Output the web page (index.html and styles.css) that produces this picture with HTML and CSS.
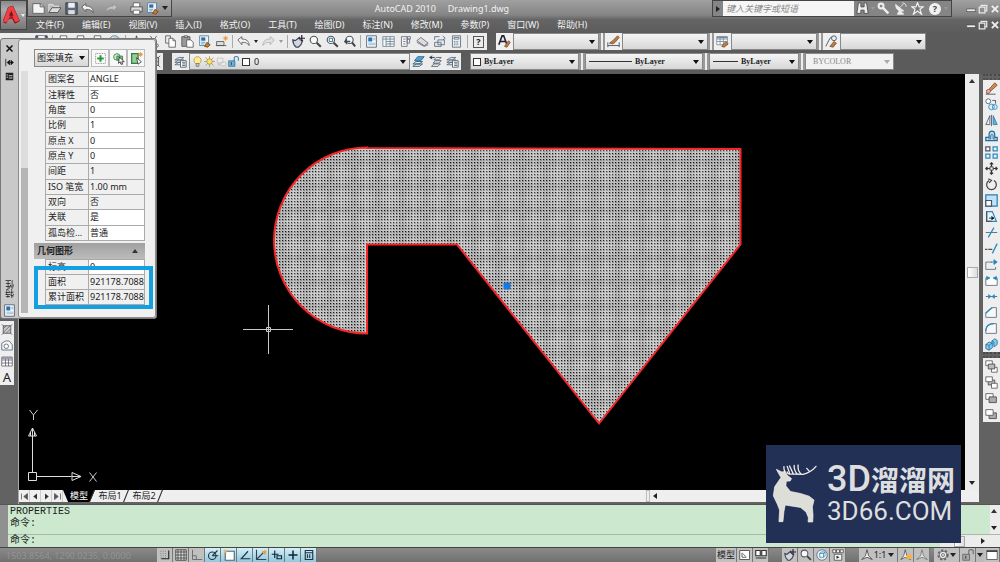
FILE: index.html
```html
<!DOCTYPE html>
<html lang="zh-CN">
<head>
<meta charset="utf-8">
<title>AutoCAD 2010 Drawing1.dwg</title>
<link rel="stylesheet" href="styles.css">
</head>
<body>
<svg class="sprite" aria-hidden="true">
  <symbol id="new" viewBox="0 0 16 16"><path d="M1 2h9l5 4v8H1z" fill="#f4f4f4" stroke="#555"/><path d="M10 2v4h5" fill="#ccc" stroke="#555"/></symbol>
  <symbol id="open" viewBox="0 0 16 16"><path d="M1 13V3h5l1 2h6v2" fill="#bbb" stroke="#eee"/><path d="M1 13l4-6h11l-4 6z" fill="#ddd" stroke="#444"/></symbol>
  <symbol id="save" viewBox="0 0 16 16"><path d="M1 1h14v14H1z" fill="#5b6a7c" stroke="#333"/><path d="M4 1h8v6H4z" fill="#eef"/><path d="M4 10h8v5H4z" fill="#ddd"/></symbol>
  <symbol id="undo" viewBox="0 0 16 16"><path d="M1 6l5-4v3c5 0 9 2 9 8-2-3-4-4-9-4v3z" fill="#f2f2f2" stroke="#555"/></symbol>
  <symbol id="redo" viewBox="0 0 16 16"><path d="M15 6l-5-4v3C5 5 1 7 1 13c2-3 4-4 9-4v3z" fill="#ddd" stroke="#888"/></symbol>
  <symbol id="print" viewBox="0 0 16 16"><path d="M4 6V1h8v5" fill="#fff" stroke="#555"/><path d="M1 6h14v6H1z" fill="#ddd" stroke="#444"/><path d="M4 10h8v5H4z" fill="#fff" stroke="#555"/></symbol>
  <symbol id="match" viewBox="0 0 16 16"><path d="M2 1h11v12H2z" fill="#eef4fa" stroke="#4b78a0"/><path d="M4 3h5v4H4z" fill="#2e6da4"/><path d="M4 9h5M4 11h4" stroke="#59a"/><path d="M8 14l3-5 4 3-3 3z" fill="#c07a35" stroke="#7a4515"/></symbol>
  <symbol id="cut" viewBox="0 0 16 16"><path d="M4 1l7 10M12 1L5 11" stroke="#556" fill="none"/><circle cx="4" cy="13" r="2" fill="none" stroke="#556"/><circle cx="12" cy="13" r="2" fill="none" stroke="#556"/></symbol>
  <symbol id="copy" viewBox="0 0 16 16"><path d="M2 1h6v9H2z" fill="#eee" stroke="#555"/><path d="M6 4h5l3 3v8H6z" fill="#fff" stroke="#555"/><path d="M11 4v3h3" fill="none" stroke="#555"/></symbol>
  <symbol id="paste" viewBox="0 0 16 16"><path d="M1 2h10v12H1z" fill="#999" stroke="#555"/><path d="M4 1h4v2H4z" fill="#ddd" stroke="#555"/><path d="M7 6h5l3 3v6H7z" fill="#fff" stroke="#555"/></symbol>
  <symbol id="block" viewBox="0 0 16 16"><path d="M2 8h9v5H2zM1 13h13" fill="#ddd" stroke="#555"/><path d="M13 1v6M10 4h6M11 2l4 4M15 2l-4 4" stroke="#e8902c"/></symbol>
  <symbol id="pan" viewBox="0 0 16 16"><path d="M1 6l3 1 5-4 1 3 3 1-2 5-3 3H5C2 12 1 9 1 6z" fill="#cfd8df" stroke="#445" stroke-width="1.500"/><path d="M12 0v8M8 4h8" stroke="#223" stroke-width="1.500"/></symbol>
  <symbol id="zoom" viewBox="0 0 16 16"><circle cx="6" cy="6" r="4.500" fill="#f4fbff" stroke="#555" stroke-width="1.400"/><path d="M9.500 9.500l5 5" stroke="#444" stroke-width="2.500"/></symbol>
  <symbol id="zoomwin" viewBox="0 0 16 16"><circle cx="6" cy="6" r="4.500" fill="#f4fbff" stroke="#555" stroke-width="1.400"/><path d="M4 4h4v4H4z" fill="none" stroke="#268"/><path d="M9.500 9.500l5 5" stroke="#444" stroke-width="2.500"/></symbol>
  <symbol id="zoomprev" viewBox="0 0 16 16"><circle cx="8" cy="6" r="4.500" fill="#f4fbff" stroke="#555" stroke-width="1.400"/><path d="M11 9l4 5" stroke="#444" stroke-width="2.500"/><path d="M1 8l4-4v3h4v2H5v3z" fill="#3b4c59"/></symbol>
  <symbol id="props" viewBox="0 0 16 16"><path d="M2 1h12v14H2z" fill="#fff" stroke="#456"/><path d="M4 3h5v5H4z" fill="#2774b5"/><path d="M10 4h3M10 6h3M4 10h9M4 12h9" stroke="#7aa5c5"/></symbol>
  <symbol id="center" viewBox="0 0 16 16"><path d="M1 2h14v12H1zM5 2v12M10 2v12M1 5h14M5 8h10M5 11h10" fill="#f5fafc" stroke="#6a7e8c"/></symbol>
  <symbol id="palette" viewBox="0 0 16 16"><path d="M3 2h7v12H3zM10 2h4v3h-4zM10 5h3v5h-3z" fill="#f5f5f5" stroke="#667"/><path d="M5 5h3M5 8h3M5 11h3" stroke="#678"/></symbol>
  <symbol id="sheet" viewBox="0 0 16 16"><path d="M1 7l5-4 9 7-5 3zM1 9l9 5 5-2" fill="#ddd" stroke="#667"/></symbol>
  <symbol id="markup" viewBox="0 0 16 16"><path d="M2 9h8v5H2zM6 6h8v6H6z" fill="#e6edf2" stroke="#567"/><path d="M2 6V2h6M12 1l3 3-3 2" fill="none" stroke="#567"/></symbol>
  <symbol id="calc" viewBox="0 0 16 16"><path d="M3 1h10v14H3z" fill="#e9eef2" stroke="#567"/><path d="M5 3h6v2H5z" fill="#fff" stroke="#567"/><path d="M5 8h6M5 10h6M5 12h6" stroke="#456" stroke-dasharray="1 1"/></symbol>
  <symbol id="layers" viewBox="0 0 16 16"><path d="M1 12l5-3h6l-4 3zM1 9l5-3h6l-4 3zM1 6l5-3h6l-4 3z" fill="#dde6ec" stroke="#567"/><path d="M8 7h7v8H8z" fill="#fff" stroke="#456"/><path d="M10 9h4M10 11h4M10 13h4" stroke="#456"/></symbol>
  <symbol id="layerblue" viewBox="0 0 16 16"><path d="M1 14l4-3h8l-4 3zM1 11l4-3h8l-4 3z" fill="#d4e8f4" stroke="#356"/><path d="M3 7l4-5h8l-4 5z" fill="#4ba3d5" stroke="#25638c"/></symbol>
  <symbol id="layerprev" viewBox="0 0 16 16"><path d="M3 14l3-3h8l-3 3zM5 10l3-3h7l-3 3zM6 6l3-3h6l-3 3z" fill="#eee" stroke="#456"/><path d="M1 3h6M1 3l3-2M1 3l3 2" stroke="#111"/></symbol>
  <symbol id="bulb" viewBox="0 0 16 16"><path d="M5 11C1 7 3 1 8 1s7 6 3 10z" fill="#ffec91" stroke="#a78837"/><path d="M6 11h4v4H6z" fill="#ccc" stroke="#666"/></symbol>
  <symbol id="sun" viewBox="0 0 16 16"><path d="M8 0v16M0 8h16M2 2l12 12M14 2L2 14" stroke="#aa9247"/><circle cx="8" cy="8" r="4" fill="#ffe26c" stroke="#94813b"/></symbol>
  <symbol id="frozen" viewBox="0 0 16 16"><path d="M2 3h8v7H2zM7 9h7v5H7z" fill="#eee" stroke="#bbb"/><path d="M3 12h3M4 10v4" stroke="#bbb"/></symbol>
  <symbol id="lock" viewBox="0 0 16 16"><path d="M9 8V3c0-3 6-3 6 0v4" fill="none" stroke="#357ba8" stroke-width="1.500"/><path d="M1 7h9v8H1z" fill="#6fb2d9" stroke="#23658f"/><path d="M5 9v4" stroke="#123"/></symbol>
  <symbol id="textstyle" viewBox="0 0 16 16"><path d="M1 12L5 1h2l4 11M3 8h6" fill="none" stroke="#223" stroke-width="2"/><path d="M8 14l5-7 2 2-4 6z" fill="#c27a43" stroke="#753"/></symbol>
  <symbol id="dimstyle" viewBox="0 0 16 16"><path d="M1 9v6M15 9v6M1 13h14" stroke="#345"/><path d="M3 10l4-3 6-6 2 2-5 6-3 2z" fill="#c27a43" stroke="#753"/></symbol>
  <symbol id="tablestyle" viewBox="0 0 16 16"><path d="M1 2h13v10H1zM1 5h13M1 8h13M5 2v10M9 2v10" fill="#fff" stroke="#789"/><path d="M1 2h13v2H1z" fill="#789"/><path d="M7 14l5-6 3 3-5 4z" fill="#c27a43" stroke="#753"/></symbol>
  <symbol id="leader" viewBox="0 0 16 16"><path d="M1 14L6 4l3-2" fill="none" stroke="#345"/><circle cx="11" cy="4" r="3" fill="#eee" stroke="#345"/><path d="M6 14l5-6 3 2-4 5z" fill="#c27a43" stroke="#753"/></symbol>
  <symbol id="search" viewBox="0 0 16 16"><path d="M3 1h3v5h4V1h3l2 13h-5v-4H6v4H1z" fill="#eee" stroke="#444"/></symbol>
  <symbol id="key" viewBox="0 0 16 16"><circle cx="5" cy="5" r="3" fill="none" stroke="#eee" stroke-width="2.500"/><path d="M7 7l7 7" stroke="#eee" stroke-width="3"/></symbol>
  <symbol id="dish" viewBox="0 0 16 16"><path d="M2 3c0 6 4 9 10 8zM7 10l-3 5h8zM7 7l5-5" fill="#eee" stroke="#eee"/><path d="M10 1c3 0 5 2 5 5" fill="none" stroke="#eee"/></symbol>
  <symbol id="star" viewBox="0 0 16 16"><path d="M8 1l2 5h5l-4 3 2 6-5-4-5 4 2-6-4-3h5z" fill="#777" stroke="#f0f0f0" stroke-width="1.500"/></symbol>
  <symbol id="min" viewBox="0 0 16 16"><path d="M1 8h14v4H1z" fill="#eee" stroke="#444"/></symbol>
  <symbol id="max" viewBox="0 0 16 16"><path d="M5 5V2h9v9h-3M2 5h9v9H2z" fill="none" stroke="#e8e8e8" stroke-width="2"/></symbol>
  <symbol id="close" viewBox="0 0 16 16"><path d="M3 3l10 10M13 3L3 13" stroke="#eee" stroke-width="3"/></symbol>
  <symbol id="addsel" viewBox="0 0 16 16"><path d="M2 2h12v12H2z" fill="#fff" stroke="#667" stroke-dasharray="1 1"/><path d="M8 4v8M4 8h8" stroke="#239a31" stroke-width="2.500"/></symbol>
  <symbol id="selobj" viewBox="0 0 16 16"><circle cx="6" cy="6" r="4" fill="#c6e8c7" stroke="#377d42"/><path d="M6 5h7v5H6z" fill="#7fc186" stroke="#377d42"/><path d="M9 6l6 6-3 0 1 3-2 0-1-3-2 2z" fill="#fff" stroke="#222"/></symbol>
  <symbol id="quicksel" viewBox="0 0 16 16"><path d="M2 2h8v12H2z" fill="#91cf96" stroke="#377d42" stroke-width="1.500"/><path d="M13 0v6M10 3h6M11 1l4 4M15 1l-4 4" stroke="#e78c24"/><path d="M8 7l6 5-4 3z" fill="#fff" stroke="#333"/></symbol>
  <symbol id="erase" viewBox="0 0 16 16"><path d="M5 9l7-8 3 3-8 7z" fill="#d48d51" stroke="#754528"/><path d="M2 10l3-1 2 2-2 3H2z" fill="#e7b8aa" stroke="#944"/><path d="M1 15h12" stroke="#444"/></symbol>
  <symbol id="copyobj" viewBox="0 0 16 16"><circle cx="4" cy="4" r="3" fill="#fff" stroke="#456"/><circle cx="8" cy="11" r="3.500" fill="#d9effa" stroke="#2785ba"/><circle cx="12" cy="11" r="3" fill="none" stroke="#2785ba"/><path d="M9 3h4v4" fill="none" stroke="#345"/></symbol>
  <symbol id="mirror" viewBox="0 0 16 16"><path d="M6 2v11H1z" fill="#eee" stroke="#456"/><path d="M10 2v11h5z" fill="#68b4e3" stroke="#26749f"/><path d="M8 1v14" stroke="#456"/></symbol>
  <symbol id="offset" viewBox="0 0 16 16"><path d="M1 13V9h4V6c0-6 7-6 7 0v3h3v4z" fill="#b8e0f5" stroke="#1e6f9f" stroke-width="1.500"/><path d="M4 11h3V7c0-2 3-2 3 0v4h3" fill="none" stroke="#456"/></symbol>
  <symbol id="array" viewBox="0 0 16 16"><path d="M1 1h5v5H1z" fill="#fff" stroke="#456" stroke-width="1.500"/><path d="M10 1h5v5h-5zM1 10h5v5H1zM10 10h5v5h-5z" fill="#e2f3fc" stroke="#3188bd" stroke-width="1.500"/></symbol>
  <symbol id="move" viewBox="0 0 16 16"><path d="M8 1v14M1 8h14M6 3l2-2 2 2M6 13l2 2 2-2M3 6L1 8l2 2M13 6l2 2-2 2" fill="none" stroke="#333" stroke-width="1.500"/><path d="M6 6h4v4H6z" fill="#eee" stroke="#333"/></symbol>
  <symbol id="rotate" viewBox="0 0 16 16"><path d="M5 3a6 6 0 1 0 6 0M4 1l4 2-3 3" fill="none" stroke="#444" stroke-width="1.500"/></symbol>
  <symbol id="scale" viewBox="0 0 16 16"><path d="M1 1h14v14H1z" fill="#c3e3f4" stroke="#2380b8" stroke-width="1.500"/><path d="M1 8h7v7H1z" fill="#fff" stroke="#456" stroke-width="1.500"/></symbol>
  <symbol id="stretch" viewBox="0 0 16 16"><path d="M2 14V2h7l5 12z" fill="#e5f3fb" stroke="#3188bd" stroke-width="1.500"/><path d="M2 2v12h6" fill="none" stroke="#456" stroke-width="1.500"/><path d="M5 10h5M8 8l3 2-3 2" stroke="#111"/></symbol>
  <symbol id="trim" viewBox="0 0 16 16"><path d="M1 8h5M10 8h5" stroke="#456"/><path d="M4 14l7-12M6 8h4" stroke="#2987bd" stroke-width="1.500"/></symbol>
  <symbol id="extend" viewBox="0 0 16 16"><path d="M0 9h3M4 9h5" stroke="#456" stroke-width="1.500"/><path d="M9 14l6-12" stroke="#2987bd" stroke-width="1.500"/></symbol>
  <symbol id="breakpt" viewBox="0 0 16 16"><path d="M1 14V5h8M1 14h12v-3" fill="none" stroke="#567"/><path d="M7 5h5M11 2l4 3-4 3z" fill="#2987bd" stroke="#2987bd"/></symbol>
  <symbol id="break" viewBox="0 0 16 16"><path d="M5 5H1v9h14V5h-4" fill="#fff" stroke="#567"/><path d="M2 3l4 2-4 2zM14 3l-4 2 4 2z" fill="#2987bd" stroke="#2987bd"/></symbol>
  <symbol id="join" viewBox="0 0 16 16"><path d="M1 8h14" stroke="#456"/><path d="M4 5l4 3-4 3zM12 5L8 8l4 3z" fill="#2987bd"/></symbol>
  <symbol id="chamfer" viewBox="0 0 16 16"><path d="M1 14V8l7-6h6v12z" fill="#f8f8f8" stroke="#567"/><path d="M1 9l8-7" stroke="#2987bd" stroke-width="1.500"/></symbol>
  <symbol id="fillet" viewBox="0 0 16 16"><path d="M1 14v-3C1 5 5 2 11 2h3v12z" fill="#f8f8f8" stroke="#567"/><path d="M1 11C1 5 5 2 11 2" fill="none" stroke="#2987bd" stroke-width="1.500"/></symbol>
  <symbol id="explode" viewBox="0 0 16 16"><path d="M1 8l4-3 4 1v6l-4 3-4-2zM8 4l4-3 3 2v5l-4 3" fill="#8bcbea" stroke="#1f6f9f"/><path d="M1 8l4 1v6M5 9l4-3M8 4l3 1v6" fill="none" stroke="#1f6f9f"/></symbol>
  <symbol id="front" viewBox="0 0 16 16"><path d="M1 1h8v6H1zM8 9h7v6H8z" fill="#fff" stroke="#555"/><path d="M4 5h8v6H4z" fill="#bbb" stroke="#444"/></symbol>
  <symbol id="back" viewBox="0 0 16 16"><path d="M4 5h8v6H4z" fill="#bbb" stroke="#444"/><path d="M1 1h8v6H1zM8 9h7v6H8z" fill="#fff" stroke="#555"/></symbol>
  <symbol id="above" viewBox="0 0 16 16"><path d="M1 2h9v7H1z" fill="#fff" stroke="#555"/><path d="M5 6h9v7H5z" fill="#aaa" stroke="#444"/></symbol>
  <symbol id="under" viewBox="0 0 16 16"><path d="M5 6h9v7H5z" fill="#aaa" stroke="#444"/><path d="M1 2h9v7H1z" fill="#fff" stroke="#555"/></symbol>
  <symbol id="hatch" viewBox="0 0 16 16"><path d="M3 3h10v10H3z" fill="#ccc" stroke="#445"/><path d="M3 7l4-4M3 12l9-9M7 13l6-6M1 1l3 3M15 1l-3 3M1 15l3-3M15 15l-3-3" stroke="#556"/></symbol>
  <symbol id="region" viewBox="0 0 16 16"><path d="M1 14V5l5-3h5l4 5v7z" fill="#f8f8f8" stroke="#456"/><circle cx="7" cy="9" r="3" fill="#fff" stroke="#456"/></symbol>
  <symbol id="table" viewBox="0 0 16 16"><path d="M1 2h14v12H1zM1 6h14M1 10h14M6 2v12M10 2v12" fill="#fff" stroke="#556"/><path d="M1 2h14v3H1z" fill="#99a"/></symbol>
  <symbol id="snap" viewBox="0 0 16 16"><path d="M2 3h9M2 6h9M2 9h9M2 12h9" stroke="#555" stroke-dasharray="1 2"/><path d="M13 2v11H3" fill="none" stroke="#222" stroke-width="1.500"/></symbol>
  <symbol id="grid" viewBox="0 0 16 16"><path d="M1 1h14v14H1zM1 4h14M1 8h14M1 12h14M4 1v14M8 1v14M12 1v14" fill="#ddd" stroke="#333"/></symbol>
  <symbol id="ortho" viewBox="0 0 16 16"><path d="M2 1v13h13M2 9h5v5" fill="none" stroke="#555"/></symbol>
  <symbol id="polar" viewBox="0 0 16 16"><circle cx="7" cy="9" r="5" fill="none" stroke="#234" stroke-width="1.500"/><path d="M7 9l7-7M7 9h8" stroke="#234" stroke-width="1.500"/></symbol>
  <symbol id="osnap" viewBox="0 0 16 16"><path d="M3 3h12v12H3z" fill="#fff" stroke="#567" stroke-width="1.500"/><path d="M1 1h4v4H1z" fill="#efb462"/></symbol>
  <symbol id="otrack" viewBox="0 0 16 16"><path d="M12 3L3 13h12" fill="none" stroke="#234" stroke-width="1.500"/></symbol>
  <symbol id="ducs" viewBox="0 0 16 16"><path d="M2 1v13h13M2 14l9-9" fill="none" stroke="#345" stroke-width="1.500"/><path d="M13 1v7M9 4h7M10 2l5 5M15 2l-5 5" stroke="#e58d25"/></symbol>
  <symbol id="dyn" viewBox="0 0 16 16"><path d="M5 2v10M1 7h9M8 9h6v4H8z" fill="none" stroke="#123" stroke-width="1.500"/></symbol>
  <symbol id="lwt" viewBox="0 0 16 16"><path d="M8 2v12M2 8h12" stroke="#123" stroke-width="2"/></symbol>
  <symbol id="qp" viewBox="0 0 16 16"><path d="M3 2h10v12H3zM3 5h10M6 7v5M9 7v5" fill="none" stroke="#234" stroke-width="1.500"/></symbol>
  <symbol id="layout" viewBox="0 0 16 16"><path d="M1 2h13v12H1z" fill="#fff" stroke="#333"/><path d="M4 5v6h6M5 6l4 4" fill="none" stroke="#333"/></symbol>
  <symbol id="views" viewBox="0 0 16 16"><path d="M1 2h6v7H1zM9 2h6v7H9zM1 12h14" fill="#fff" stroke="#333" stroke-width="1.500"/></symbol>
  <symbol id="wheel" viewBox="0 0 16 16"><circle cx="8" cy="8" r="7" fill="#e3edf2" stroke="#567"/><path d="M5 6h5v5H5zM5 6l2-2h5v5l-2 2M10 6l2-2" fill="#fff" stroke="#2a7fae"/></symbol>
  <symbol id="motion" viewBox="0 0 16 16"><path d="M1 1h4v4H1zM6 1h4v4H6zM11 1h4v4h-4zM3 7h10v8H3z" fill="#f4f4f4" stroke="#444"/><path d="M6 9l4 2-4 2z" fill="#222"/></symbol>
  <symbol id="anno" viewBox="0 0 16 16"><path d="M8 1l2 8 5 5-7-3-7 3 5-5z" fill="#fff" stroke="#333"/></symbol>
  <symbol id="annobulb" viewBox="0 0 16 16"><path d="M7 1l2 8 5 5-7-3-6 3 4-5z" fill="#fff" stroke="#444"/><circle cx="12" cy="10" r="3.500" fill="#f9b23e"/></symbol>
  <symbol id="gear" viewBox="0 0 16 16"><circle cx="8" cy="8" r="6" fill="none" stroke="#666" stroke-width="3" stroke-dasharray="3 2"/><circle cx="8" cy="8" r="5" fill="#eee" stroke="#555"/><circle cx="8" cy="8" r="2" fill="none" stroke="#555"/></symbol>
  <symbol id="clean" viewBox="0 0 16 16"><path d="M1 2h14v12H1z" fill="#fff" stroke="#444"/><path d="M1 3h14" stroke="#444" stroke-width="2"/></symbol>
</svg>

<div class="app">
  <header class="header">
    <button class="app-menu" aria-label="应用程序菜单">
      <svg class="app-logo" viewBox="0 0 24 28"><path d="M0 23L7 4l6-2 9 20-6 3-4-7-6 2-2 5z" fill="#c51822" stroke="#7b1016"/><path d="M7 4l6-2 9 20-6 1-5-12-5 13-6-1z" fill="#ee3f45"/><path d="M8 15l3-7 3 7z" fill="#6d1a20"/></svg>
      <i class="tri light"></i>
    </button>
    <div class="header-rows">
      <div class="title-row">
        <div class="quick">
          <button aria-label="新建"><svg><use href="#new"/></svg></button><button aria-label="打开"><svg><use href="#open"/></svg></button><button aria-label="保存"><svg><use href="#save"/></svg></button><button aria-label="放弃"><svg><use href="#undo"/></svg></button><i class="tri dim"></i><button aria-label="重做"><svg class="faded"><use href="#redo"/></svg></button><i class="tri dim"></i><button aria-label="打印"><svg><use href="#print"/></svg></button><button aria-label="特性匹配"><svg><use href="#match"/></svg></button><i class="tri"></i>
        </div>
        <h1 class="title"><span>AutoCAD 2010</span><span>Drawing1.dwg</span></h1>
        <div class="info">
          <i class="tri right"></i>
          <input type="text" placeholder="键入关键字或短语" aria-label="搜索">
          <div class="info-tools"><button aria-label="搜索"><svg><use href="#search"/></svg></button><i class="tri dim"></i><button aria-label="速博中心"><svg><use href="#key"/></svg></button><button aria-label="通讯中心"><svg><use href="#dish"/></svg></button><button aria-label="收藏夹"><svg><use href="#star"/></svg></button><button class="help" aria-label="帮助">?</button><i class="tri dim"></i></div>
        </div>
        <div class="win"><button aria-label="最小化"><svg><use href="#min"/></svg></button><button aria-label="还原"><svg><use href="#max"/></svg></button><button aria-label="关闭"><svg><use href="#close"/></svg></button></div>
      </div>
      <div class="menu-row">
        <nav class="menu"><button>文件(F)</button><button>编辑(E)</button><button>视图(V)</button><button>插入(I)</button><button>格式(O)</button><button>工具(T)</button><button>绘图(D)</button><button>标注(N)</button><button>修改(M)</button><button>参数(P)</button><button>窗口(W)</button><button>帮助(H)</button></nav>
        <div class="win"><button aria-label="最小化图形"><svg><use href="#min"/></svg></button><button aria-label="还原图形"><svg><use href="#max"/></svg></button><button aria-label="关闭图形"><svg><use href="#close"/></svg></button></div>
      </div>
    </div>
  </header>

  <div class="toolbars">
    <div class="bar">
      <div class="strip standard">
        <button aria-label="快速新建"><svg><use href="#save"/></svg></button><i class="sep"></i><button aria-label="打开文件"><svg><use href="#print"/></svg></button><button aria-label="保存文件"><svg><use href="#print"/></svg></button><button aria-label="打印预览"><svg><use href="#print"/></svg></button><button aria-label="发布"><svg><use href="#wheel"/></svg></button><i class="sep"></i><button aria-label="三维"><svg><use href="#anno"/></svg></button><button aria-label="剪切"><svg><use href="#cut"/></svg></button><button aria-label="复制"><svg><use href="#copy"/></svg></button><button aria-label="粘贴"><svg><use href="#paste"/></svg></button><button aria-label="匹配"><svg><use href="#match"/></svg></button><button aria-label="块编辑器"><svg><use href="#block"/></svg></button><i class="sep"></i><button aria-label="撤销"><svg><use href="#undo"/></svg></button><i class="tri"></i><button aria-label="恢复"><svg class="faded"><use href="#redo"/></svg></button><i class="tri dim"></i><i class="sep"></i><button aria-label="平移"><svg><use href="#pan"/></svg></button><button aria-label="缩放"><svg><use href="#zoom"/></svg></button><button aria-label="窗口缩放"><svg><use href="#zoomwin"/></svg></button><button aria-label="上一个"><svg><use href="#zoomprev"/></svg></button><i class="sep"></i><button aria-label="特性"><svg><use href="#props"/></svg></button><button aria-label="设计中心"><svg><use href="#center"/></svg></button><button aria-label="工具选项板"><svg><use href="#palette"/></svg></button><button aria-label="图纸集"><svg><use href="#sheet"/></svg></button><button aria-label="标记集"><svg><use href="#markup"/></svg></button><button aria-label="计算器"><svg><use href="#calc"/></svg></button><i class="sep"></i><button class="boxed-q" aria-label="帮助主题">?</button>
      </div>
      <div class="strip styles">
        <button aria-label="文字样式"><svg><use href="#textstyle"/></svg></button><div class="combo"><select aria-label="文字样式列表"><option></option></select></div>
        <i class="grip"></i><button aria-label="标注样式"><svg><use href="#dimstyle"/></svg></button><div class="combo"><select aria-label="标注样式列表"><option></option></select></div>
        <i class="grip"></i><button aria-label="表格样式"><svg><use href="#tablestyle"/></svg></button><div class="combo"><select aria-label="表格样式列表"><option></option></select></div>
        <i class="grip"></i><button aria-label="引线样式"><svg><use href="#leader"/></svg></button><div class="combo"><select aria-label="引线样式列表"><option></option></select></div>
      </div>
    </div>
    <div class="bar">
      <div class="strip workspace"><button aria-label="工作空间"><svg><use href="#hatch"/></svg></button></div>
      <div class="strip layer">
        <button aria-label="图层特性"><svg><use href="#layers"/></svg></button>
        <div class="combo layer-combo"><svg><use href="#bulb"/></svg><svg><use href="#sun"/></svg><svg><use href="#frozen"/></svg><svg><use href="#lock"/></svg><i class="swatch"></i><select aria-label="图层"><option>0</option></select></div>
        <button aria-label="置为当前"><svg><use href="#layerblue"/></svg></button><button aria-label="上一图层"><svg><use href="#layerprev"/></svg></button><button aria-label="图层状态"><svg><use href="#layers"/></svg></button>
      </div>
      <div class="strip object">
        <div class="combo color"><i class="swatch"></i><select aria-label="颜色"><option>ByLayer</option></select></div><i class="grip"></i>
        <div class="combo ltype"><i class="rule"></i><select aria-label="线型"><option>ByLayer</option></select></div><i class="grip"></i>
        <div class="combo lweight"><i class="rule"></i><select aria-label="线宽"><option>ByLayer</option></select></div><i class="grip"></i>
        <div class="combo off"><select aria-label="打印样式" disabled><option>BYCOLOR</option></select></div>
      </div>
    </div>
  </div>

  <main class="work">
    <aside class="left-dock"><div class="dock-tools"><button aria-label="图案填充"><svg><use href="#hatch"/></svg></button><button aria-label="面域"><svg><use href="#region"/></svg></button><button aria-label="表格"><svg><use href="#table"/></svg></button><button class="mtext" aria-label="多行文字">A</button></div></aside>
    <section class="doc">
      <div class="doc-view">
        <svg class="drawing" viewBox="19 74 946 416" preserveAspectRatio="xMinYMin slice">
          <defs>
            <pattern id="angle" width="3" height="3" patternUnits="userSpaceOnUse"><path d="M0 0h3v3H0z" fill="#c6c6c6"/><path d="M0 0h2v2H0z" fill="#969696"/><path d="M0 0h1v1H0z" fill="#181818"/></pattern>
            <pattern id="weave" width="24" height="24" patternUnits="userSpaceOnUse"><path d="M0 6h24M6 0v24" stroke="#fff" stroke-width="3" stroke-opacity="0.160"/><path d="M0 18h24M18 0v24" stroke="#000" stroke-width="6" stroke-opacity="0.060"/></pattern>
          </defs>
          <path d="M367 147.500A93 93 0 0 0 367 333.500V244.500H457L599 423.500L740.500 244.500V149L367 148z" fill="url(#angle)"/>
          <path d="M367 147.500A93 93 0 0 0 367 333.500V244.500H457L599 423.500L740.500 244.500V149L367 148z" fill="url(#weave)" stroke="#f4262a" stroke-width="2"/>
          <path d="M504 283h6v6h-6z" fill="#0a7df0" stroke="#2a70c4"/>
          <path d="M243 329.500h22M271 329.500h22M268.500 305v22M268.500 332v22" stroke="#c8c8c8"/>
          <path d="M266.500 327.500h4v4h-4zM265 329.500h7M268.500 326v7" fill="none" stroke="#c8c8c8"/>
          <path d="M28.500 472.500h8v8h-8zM36.500 476.500h35M32.500 472V436" fill="none" stroke="#ddd"/>
          <path d="M32.500 428l4 8h-8zM81 476.500l-9-4v8zM32.500 428v8M72 476.500h8M30.500 432v4M34.500 432v4" fill="none" stroke="#ddd"/>
          <path d="M29.500 410l4 5 4-5M33.500 415v5M89.500 472.500l7 9M96.500 472.500l-7 9" fill="none" stroke="#ccc"/>
        </svg>
        <div class="vscroll"><i class="tri up"></i><i class="thumb"></i><i class="tri"></i></div>
      </div>
      <div class="tabs">
        <button aria-label="第一个"><svg viewBox="0 0 12 12"><path d="M2 2v8M10 2L5 6l5 4z" fill="#555" stroke="#555"/></svg></button><button aria-label="前一个"><svg viewBox="0 0 12 12"><path d="M8 2L3 6l5 4z" fill="#333"/></svg></button><button aria-label="后一个"><svg viewBox="0 0 12 12"><path d="M4 2l5 4-5 4z" fill="#333"/></svg></button><button aria-label="最后一个"><svg viewBox="0 0 12 12"><path d="M10 2v8M2 2l5 4-5 4z" fill="#555" stroke="#555"/></svg></button>
        <button class="tab current">模型</button><button class="tab">布局1</button><button class="tab">布局2</button>
        <div class="hscroll"><i class="split"></i><i class="tri left"></i></div>
      </div>
    </section>
    <aside class="right-dock">
      <i class="dock-grip"></i>
      <div class="dock-tools"><button aria-label="删除"><svg><use href="#erase"/></svg></button><button aria-label="复制对象"><svg><use href="#copyobj"/></svg></button><button aria-label="镜像"><svg><use href="#mirror"/></svg></button><button aria-label="偏移"><svg><use href="#offset"/></svg></button><button aria-label="阵列"><svg><use href="#array"/></svg></button><button aria-label="移动"><svg><use href="#move"/></svg></button><button aria-label="旋转"><svg><use href="#rotate"/></svg></button><button aria-label="比例缩放"><svg><use href="#scale"/></svg></button><button aria-label="拉伸"><svg><use href="#stretch"/></svg></button><button aria-label="修剪"><svg><use href="#trim"/></svg></button><button aria-label="延伸"><svg><use href="#extend"/></svg></button><button aria-label="打断于点"><svg><use href="#breakpt"/></svg></button><button aria-label="打断"><svg><use href="#break"/></svg></button><button aria-label="合并"><svg><use href="#join"/></svg></button><button aria-label="倒角"><svg><use href="#chamfer"/></svg></button><button aria-label="圆角"><svg><use href="#fillet"/></svg></button><button aria-label="分解"><svg><use href="#explode"/></svg></button></div>
      <i class="dock-grip"></i>
      <div class="dock-tools"><button aria-label="前置"><svg><use href="#front"/></svg></button><button aria-label="后置"><svg><use href="#back"/></svg></button><button aria-label="置于对象之上"><svg><use href="#above"/></svg></button><button aria-label="置于对象之下"><svg><use href="#under"/></svg></button></div>
    </aside>
  </main>

  <section class="command">
    <i class="command-grip"></i>
    <div class="command-body">
      <div class="history"><div class="log"><p>PROPERTIES</p><p>命令:</p></div><div class="command-scroll"><i class="tri up"></i><i class="tri"></i></div></div>
      <div class="prompt"><label for="cmd">命令:</label><input id="cmd" type="text"><div class="prompt-scroll"><i class="thumb"></i><i class="tri right"></i></div></div>
    </div>
  </section>

  <footer class="status">
    <span class="coords">1503.8564, 1290.0235, 0.0000</span>
    <div class="toggles"><button aria-label="捕捉"><svg><use href="#snap"/></svg></button><button aria-label="栅格"><svg><use href="#grid"/></svg></button><button aria-label="正交"><svg><use href="#ortho"/></svg></button><button class="on" aria-label="极轴"><svg><use href="#polar"/></svg></button><button class="on" aria-label="对象捕捉"><svg><use href="#osnap"/></svg></button><button class="on" aria-label="对象追踪"><svg><use href="#otrack"/></svg></button><button class="on" aria-label="动态坐标系"><svg><use href="#ducs"/></svg></button><button class="on" aria-label="动态输入"><svg><use href="#dyn"/></svg></button><button class="on" aria-label="显示线宽"><svg><use href="#lwt"/></svg></button><button class="on" aria-label="快捷特性"><svg><use href="#qp"/></svg></button></div>
    <div class="status-right">
      <div class="cells"><button class="model">模型</button><button aria-label="布局"><svg><use href="#layout"/></svg></button><button aria-label="快速查看"><svg><use href="#views"/></svg></button></div>
      <div class="cells"><button aria-label="平移视图"><svg><use href="#pan"/></svg></button><button aria-label="缩放视图"><svg><use href="#zoom"/></svg></button><button aria-label="控制盘"><svg><use href="#wheel"/></svg></button><button aria-label="运动"><svg><use href="#motion"/></svg></button></div>
      <div class="cells anno-cells"><button class="ratio"><svg><use href="#anno"/></svg>1:1<i class="tri"></i></button><button aria-label="注释可见性"><svg><use href="#annobulb"/></svg></button><button aria-label="自动比例"><svg class="faded"><use href="#anno"/></svg></button></div>
      <div class="cells"><button class="gear" aria-label="切换工作空间"><svg><use href="#gear"/></svg><i class="tri"></i></button><button aria-label="锁定"><svg class="gray"><use href="#lock"/></svg></button><i class="tri"></i><button aria-label="全屏显示"><svg><use href="#clean"/></svg></button></div>
    </div>
  </footer>

  <aside class="palette">
    <div class="palette-rail">
      <button aria-label="关闭选项板"><svg viewBox="0 0 12 12"><path d="M2 2l8 8M10 2l-8 8" stroke="#111" stroke-width="2"/></svg></button>
      <button aria-label="自动隐藏"><svg viewBox="0 0 12 12"><path d="M1 1v10M3 6h8M6 3L3 6l3 3zM8 3l3 3-3 3z" fill="#111" stroke="#111"/></svg></button>
      <button aria-label="选项板特性"><svg viewBox="0 0 12 12"><path d="M1 1h10v10H1z" fill="#222"/><path d="M2 4h2M2 7h2M5 5h5M5 8h5" stroke="#fff"/></svg></button>
      <span class="rail-title">特性</span>
      <svg class="rail-icon"><use href="#props"/></svg>
    </div>
    <div class="palette-body">
      <i class="palette-scroll"></i>
      <div class="palette-main">
        <div class="picker"><div class="combo"><select aria-label="对象类型"><option>图案填充</option></select></div><button aria-label="切换 PICKADD"><svg><use href="#addsel"/></svg></button><button aria-label="选择对象"><svg><use href="#selobj"/></svg></button><button aria-label="快速选择"><svg><use href="#quicksel"/></svg></button></div>
        <table class="props pattern">
          <tr><th>图案名</th><td>ANGLE</td></tr><tr><th>注释性</th><td>否</td></tr><tr><th>角度</th><td>0</td></tr><tr><th>比例</th><td>1</td></tr><tr><th>原点 X</th><td>0</td></tr><tr><th>原点 Y</th><td>0</td></tr><tr class="locked"><th>间距</th><td>1</td></tr><tr class="locked"><th>ISO 笔宽</th><td>1.00 mm</td></tr><tr class="locked"><th>双向</th><td>否</td></tr><tr><th>关联</th><td>是</td></tr><tr><th>孤岛检...</th><td>普通</td></tr>
        </table>
        <button class="group-head">几何图形<i class="tri up"></i></button>
        <div class="geometry">
          <table class="props">
            <tr><th>标高</th><td>0</td></tr><tr class="locked"><th>面积</th><td>921178.7088</td></tr><tr class="locked"><th>累计面积</th><td>921178.7088</td></tr>
          </table>
          <i class="callout"></i>
        </div>
      </div>
    </div>
  </aside>

  <div class="brand">
    <svg class="deer" viewBox="396 92 142 184"><path d="M409 114l17 8 10-2 7 13 12 9-4 7-12 1-1 14 14 17 30 6 26 8 15 12-5 20 2 26-1 20h-14l1-13-7-17-17-14-46-7-4 20-3 30h-12l2-35-7-18-12-25 4-27 19-28z" fill="#deded9" stroke="#f4f4f0" stroke-width="2"/><path d="M435 122q-4-9-3-16M442 122q0 8 18 6l30 1q24-6 39-24M449 125l-7-20M460 127l-11-23M472 128q-10-12-9-26M484 129q-12-14-9-28M509 120l-8-9" fill="none" stroke="#ecece8" stroke-width="4" stroke-linecap="round"/></svg>
    <div class="brand-text"><div class="brand-name"><span>3D</span><b>溜溜网</b></div><div class="brand-site">3D66.COM</div></div>
  </div>
</div>
</body>
</html>
```

FILE: styles.css
```css
* { box-sizing: border-box; }
body {
  margin: 0;
  height: 100vh;
  overflow: hidden;
  background: #666;
  color: #222;
  font: 9px/12px "Noto Sans", "Noto Sans CJK SC", sans-serif;
}
button {
  margin: 0; padding: 0; border: 0;
  background: none; color: inherit; font: inherit;
  display: flex; align-items: center; justify-content: center;
  white-space: nowrap;
}
input, select { margin: 0; padding: 0; border: 0; font: inherit; color: inherit; background: none; min-width: 0; border-radius: 0; }
select { appearance: none; opacity: 1; }
svg { display: block; width: 13px; height: 13px; flex: none; }
i { display: block; flex: none; }
p, h1 { margin: 0; font: inherit; }
.sprite { position: absolute; width: 0; height: 0; }
.faded { opacity: 0.6; }
.gray { filter: grayscale(1); }

.tri { width: 0; height: 0; border: 3px solid transparent; border-top: 4px solid #222; border-bottom: 0; margin: auto 1px; }
.tri.light { border-top-color: #eee; }
.tri.dim { border-top-color: #999; }
.tri.up { border-top: 0; border-bottom: 4px solid #333; }
.tri.right { border: 3px solid transparent; border-left: 4px solid #222; border-right: 0; }
.tri.left { border: 3px solid transparent; border-right: 4px solid #222; border-left: 0; }

.app { position: relative; display: flex; flex-direction: column; height: 100%; }

/* Title bar and menus */
.header { display: flex; height: 33px; background: linear-gradient(#a0a0a0, #858585 45%, #646464 60%, #5c5c5c); color: #f2f2f2; }
.app-menu { width: 27px; height: 30px; border: 1px solid #444; background: linear-gradient(#888, #aaa 30%, #777); }
.app-logo { width: 18px; height: 26px; }
.app-menu .tri { border-width: 2px; border-top-width: 3px; border-bottom: 0; margin: 0; }
.header-rows { flex: 1; display: flex; flex-direction: column; min-width: 0; }
.title-row { display: flex; height: 17px; }
.quick { display: flex; align-items: center; width: 145px; padding: 0 2px; border: 1px solid #444; border-top: 0; background: linear-gradient(#aaa, #8a8a8a); }
.quick button { width: 17px; }
.quick .dim { border-width: 2px; border-top-width: 3px; border-bottom: 0; margin: auto 2px; }
.title { flex: 1; display: flex; gap: 12px; justify-content: center; line-height: 17px; }
.info { display: flex; width: 240px; border: 1px solid #444; background: #858585; }
.info > .tri { margin: auto 3px; }
.info input { flex: 1; background: #f6f6f6; padding-left: 3px; font-style: italic; }
.info input::placeholder { color: #888; opacity: 1; }
.info-tools { display: flex; align-items: center; width: 97px; }
.info-tools button { width: 17px; }
.info-tools .tri { border-width: 2px; border-top-width: 3px; border-bottom: 0; margin: 0; }
.info-tools .help { width: 12px; height: 12px; margin: 0 3px; border-radius: 6px; background: #f2f2f2; color: #444; font-weight: bold; }
.win { display: flex; align-items: center; gap: 1px; padding-left: 13px; width: 48px; }
.win button { width: 12px; }
.win svg { width: 10px; height: 10px; }
.menu-row { display: flex; justify-content: space-between; height: 16px; }
.menu { display: flex; gap: 18px; padding-left: 9px; }

/* Docked toolbars */
.toolbars { display: flex; flex-direction: column; gap: 3px; padding-bottom: 4px; background: #5b5b5b; }
.bar { display: flex; gap: 9px; height: 17px; }
.strip { display: flex; align-items: center; background: #ececec; }
.strip button { width: 17px; height: 17px; }
.standard { padding-left: 33px; }
.standard > .tri { border-width: 2px; border-top-width: 3px; border-bottom: 0; margin: auto 2px; }
.sep { width: 1px; height: 13px; margin: 0 2px; background: #aaa; }
.standard .boxed-q { width: 11px; height: 12px; margin: 0 3px; border: 1px solid #555; font-weight: bold; }
.combo { display: flex; align-items: center; position: relative; height: 17px; border: 1px solid #888; background: linear-gradient(#f5f5f5, #d7d7d7); }
.combo::after { content: ""; position: absolute; right: 3px; top: 6px; border: 3px solid transparent; border-top: 4px solid #111; border-bottom: 0; pointer-events: none; }
.combo select { flex: 1; width: 100%; height: 15px; padding: 0 12px 0 3px; }
.styles { background: #d8d8d8; }
.styles .combo { width: 86px; }
.styles button { background: #f0f0f0; }
.grip { width: 6px; height: 17px; border: solid #999; border-width: 0 2px; background: #eee; }
.workspace { width: 163px; justify-content: flex-end; }
.layer-combo { width: 221px; gap: 1px; padding-left: 2px; }
.layer-combo svg { width: 11px; height: 11px; }
.swatch { width: 8px; height: 8px; margin-left: 2px; border: 1px solid #333; background: #fff; }
.object { font: 8px/12px "Liberation Serif", serif; }
.object select { font-weight: bold; }
.object .color { width: 109px; }
.object .ltype { width: 118px; }
.object .lweight { width: 90px; }
.rule { height: 1px; margin-left: 3px; background: #333; }
.ltype .rule { width: 43px; }
.lweight .rule { width: 25px; }
.object .off { width: 89px; background: #f2f2f2; color: #888; }
.off::after { border-top-color: #aaa; }
.off select { font-weight: normal; padding-left: 7px; }

/* Drawing area */
.work { flex: 1; display: flex; min-height: 0; background: #626262; }
.left-dock { width: 19px; display: flex; padding: 247px 4px 0 0; border-right: 1px solid #aaa; }
.dock-tools { display: flex; flex-direction: column; width: 100%; background: #eee; }
.left-dock .dock-tools { align-self: flex-start; }
.dock-tools button { height: 16px; }
.left-dock svg { width: 12px; }
.mtext { font-size: 13px; }
.doc { flex: 1; display: flex; flex-direction: column; min-width: 0; }
.doc-view { flex: 1; display: flex; min-height: 0; }
.drawing { flex: 1 1 0; width: auto; height: auto; min-width: 0; background: #000; }
.vscroll { width: 14px; display: flex; flex-direction: column; justify-content: space-between; align-items: center; padding: 5px 0; background: #ececec; }
.vscroll .tri { margin: 0; }
.vscroll .thumb { margin-bottom: 20px; }
.thumb { width: 11px; height: 11px; border: 1px solid #aaa; background: linear-gradient(90deg, #fff, #ddd); }
.tabs { display: flex; height: 12px; margin-bottom: 2px; background: #efefef; }
.tabs > button { width: 11px; border-right: 1px solid #ccc; }
.tabs svg { width: 9px; height: 9px; }
.tabs > .tab { position: relative; width: 34px; padding-right: 4px; border: 0; }
.tab::after { content: ""; position: absolute; right: 0; top: 0; width: 6px; height: 12px; background: #333; clip-path: polygon(80% 0, 100% 0, 20% 100%, 0 100%); }
.tabs > .current { width: 32px; padding-right: 0; background: #000; color: #fff; clip-path: polygon(0 0, 100% 0, 84% 100%, 16% 100%); }
.hscroll { flex: 1; display: flex; justify-content: flex-end; padding-right: 321px; }
.hscroll .split { width: 4px; border: 1px solid #bbb; margin-right: 2px; }
.right-dock { width: 21px; padding-left: 4px; }
.dock-grip { height: 6px; border-top: 2px dotted #484848; border-bottom: 2px dotted #505050; }

/* Command window */
.command { display: flex; height: 44px; border-top: 1px solid #555; border-bottom: 1px solid #444; background: #cce8cf; font: 10px/12px "Liberation Mono", "Noto Sans CJK SC", monospace; }
.command-grip { width: 8px; background: #909090; }
.command-body { flex: 1; display: flex; flex-direction: column; min-width: 0; }
.history { display: flex; justify-content: space-between; height: 30px; border-bottom: 1px solid #a4bba6; }
.log { padding: 1px 2px; }
.command-scroll { display: flex; flex-direction: column; justify-content: space-between; width: 10px; padding: 4px 1px; background: #ececec; }
.command-scroll .tri { margin: 0; }
.prompt { flex: 1; display: flex; align-items: center; padding-left: 2px; }
.prompt input { flex: 1; }
.prompt-scroll { display: flex; align-items: center; align-self: stretch; width: 60px; padding: 0 15px 0 14px; justify-content: space-between; background: #ececec; }
.prompt-scroll .tri { margin: 0; }

/* Status bar */
.status { display: flex; height: 14px; background: linear-gradient(#8a8a8a, #707070); }
.coords { width: 157px; padding-left: 6px; color: #939393; line-height: 16px; }
.toggles, .cells { display: flex; }
.toggles button, .cells button { width: 16px; border: solid #777; border-width: 0 1px 0 0; background: #c0c0c0; }
.status svg { width: 12px; height: 12px; }
.toggles .on { background: linear-gradient(#d5f0f8, #8fc9dd); }
.status-right { flex: 1; display: flex; justify-content: flex-end; gap: 13px; }
.cells { background: #bbb; }
.anno-cells { margin-right: -9px; }
.cells .model { width: 21px; }
.cells .ratio { width: 39px; gap: 1px; }
.cells .gear { width: 26px; }

/* Properties palette */
.palette { position: absolute; left: 0; top: 38px; display: flex; width: 157px; border: 1px solid #777; border-radius: 3px; background: #c9c9c9; }
.palette-rail { width: 17px; display: flex; flex-direction: column; align-items: center; padding-top: 2px; }
.palette-rail button { height: 14px; }
.palette-rail button svg { width: 9px; height: 9px; }
.rail-title { writing-mode: vertical-rl; transform: rotate(180deg); margin-top: auto; }
.rail-icon { margin: 6px 0 1px; }
.palette-body { flex: 1; display: flex; gap: 6px; padding: 9px 10px 12px 2px; border: 1px solid #8c8c8c; border-radius: 3px; background: #f0f0f0; }
.palette-scroll { width: 7px; margin: 22px 0 -8px; background: linear-gradient(#ddd 40%, #b5b5b5 40%); }
.palette-main { flex: 1; display: flex; flex-direction: column; min-width: 0; }
.picker { display: flex; margin-bottom: 4px; }
.picker .combo { width: 55px; margin-right: 2px; height: 18px; }
.picker select { padding: 0 10px 0 2px; }
.picker button { width: 18px; height: 18px; border: 1px solid #bbb; background: #f8f8f8; }
.props { align-self: flex-end; width: 100px; margin-left: auto; table-layout: fixed; border-collapse: collapse; line-height: 12px; }
.pattern { height: 170px; }
.props th, .props td { height: 15px; padding: 0 0 0 2px; border: 1px solid #aaa; background: #fff; font-weight: normal; text-align: left; white-space: nowrap; }
.props td { padding-left: 1px; }
.props th { width: 43px; background: #f0f0f0; }
.props .locked td { background: #f0f0f0; }
.group-head { justify-content: space-between; height: 16px; margin-top: 2px; padding: 0 6px 0 3px; background: linear-gradient(#a0a0a0, #bcbcbc); font-weight: bold; }
.geometry { position: relative; }
.callout { position: absolute; inset: 7px -8px -4px 0; border: 4px solid #14a0e0; }

/* Brand panel */
.brand { position: absolute; right: 39px; bottom: 19px; display: flex; gap: 8px; width: 195px; height: 98px; padding: 17px 4px 0 6px; background: #233056; color: #dedede; }
.deer { width: 47px; height: 61px; }
.brand-name { display: flex; align-items: center; height: 35px; }
.brand-name span { font: 500 36px/35px Roboto, sans-serif; }
.brand-name b { font: bold 28px/35px "Noto Sans CJK SC", sans-serif; }
.brand-site { font: 26px/28px Roboto, sans-serif; }
```
